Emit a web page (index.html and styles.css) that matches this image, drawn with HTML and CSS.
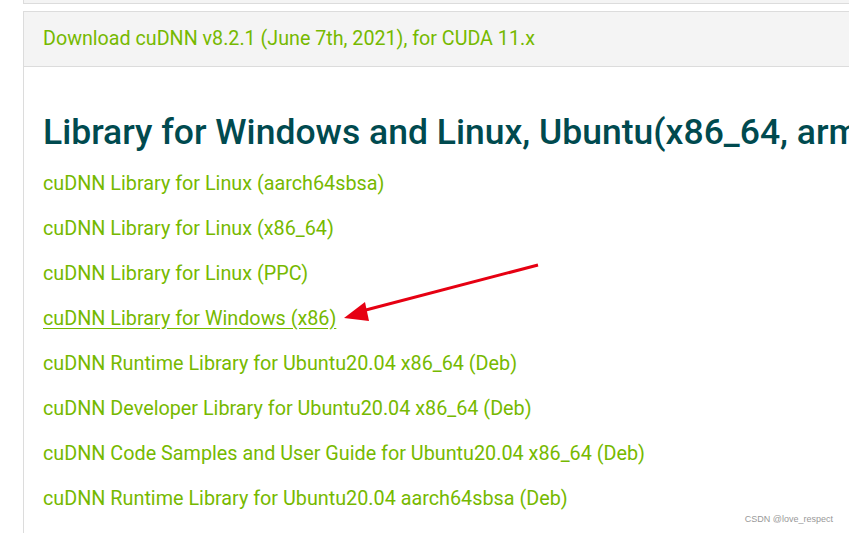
FILE: index.html
```html
<!DOCTYPE html>
<html lang="en">
<head>
    <meta charset="UTF-8">
    <meta name="viewport" content="width=device-width, initial-scale=1.0">
    <title>cuDNN Download</title>
    <link rel="stylesheet" href="styles.css">
</head>
<body>
    <div class="prev-panel"></div>

    <div class="panel">
        <div class="panel-header">
            <a href="#">Download cuDNN v8.2.1 (June 7th, 2021), for CUDA 11.x</a>
        </div>
        <div class="panel-body">
            <h3>Library for Windows and Linux, Ubuntu(x86_64, armsbsa, PPC architecture)</h3>
            <ul class="downloads">
                <li><a href="#">cuDNN Library for Linux (aarch64sbsa)</a></li>
                <li><a href="#">cuDNN Library for Linux (x86_64)</a></li>
                <li><a href="#">cuDNN Library for Linux (PPC)</a></li>
                <li><a href="#" class="hover">cuDNN Library for Windows (x86)</a></li>
                <li><a href="#">cuDNN Runtime Library for Ubuntu20.04 x86_64 (Deb)</a></li>
                <li><a href="#">cuDNN Developer Library for Ubuntu20.04 x86_64 (Deb)</a></li>
                <li><a href="#">cuDNN Code Samples and User Guide for Ubuntu20.04 x86_64 (Deb)</a></li>
                <li><a href="#">cuDNN Runtime Library for Ubuntu20.04 aarch64sbsa (Deb)</a></li>
            </ul>
        </div>
    </div>

    <svg class="arrow" width="849" height="533" viewBox="0 0 849 533">
        <line x1="538" y1="265" x2="362" y2="311" stroke="#e60012" stroke-width="3"/>
        <polygon points="344,318 365,302 369,321" fill="#e60012"/>
    </svg>

    <div class="watermark">CSDN @love_respect</div>
</body>
</html>
```

FILE: styles.css
```css
:root {
    --nv-green: #76b900;
    --nv-teal: #004a4f;
    --line: #dcdcdc;
    --header-bg: #f4f4f4;
}
html, body {
    margin: 0;
    height: 100%;
    overflow: hidden;
}
body {
    font-family: Roboto, "Liberation Sans", sans-serif;
    background-color: #fff;
    color: #333;
    position: relative;
}
a {
    color: var(--nv-green);
    text-decoration: none;
}
.prev-panel {
    margin-left: 23px;
    height: 3px;
    background-color: var(--header-bg);
    border-left: 1px solid var(--line);
    border-bottom: 1px solid var(--line);
}
.panel {
    margin-top: 7px;
    margin-left: 23px;
    border: 1px solid var(--line);
    border-right: none;
    height: 600px;
    overflow: hidden;
}
.panel-header {
    background-color: var(--header-bg);
    border-bottom: 1px solid var(--line);
    height: 55px;
    padding: 0 0 2px 19px;
    box-sizing: border-box;
    display: flex;
    align-items: center;
    font-size: 19.7px;
}
.panel-body {
    padding: 43px 19px 0;
}
h3 {
    margin: 0 0 7px;
    font-size: 35.5px;
    font-weight: 500;
    color: var(--nv-teal);
    white-space: nowrap;
    line-height: 44px;
}
.downloads {
    list-style: none;
    margin: 0;
    padding: 0;
}
.downloads li {
    height: 45px;
    line-height: 45px;
    font-size: 19.8px;
}
.downloads a.hover {
    text-decoration: underline;
    text-underline-offset: 3px;
}
.arrow {
    position: absolute;
    top: 0;
    left: 0;
}
.watermark {
    position: absolute;
    right: 16px;
    bottom: 9px;
    font-family: "Liberation Sans", Arial, sans-serif;
    font-size: 9px;
    color: #999;
}
```
